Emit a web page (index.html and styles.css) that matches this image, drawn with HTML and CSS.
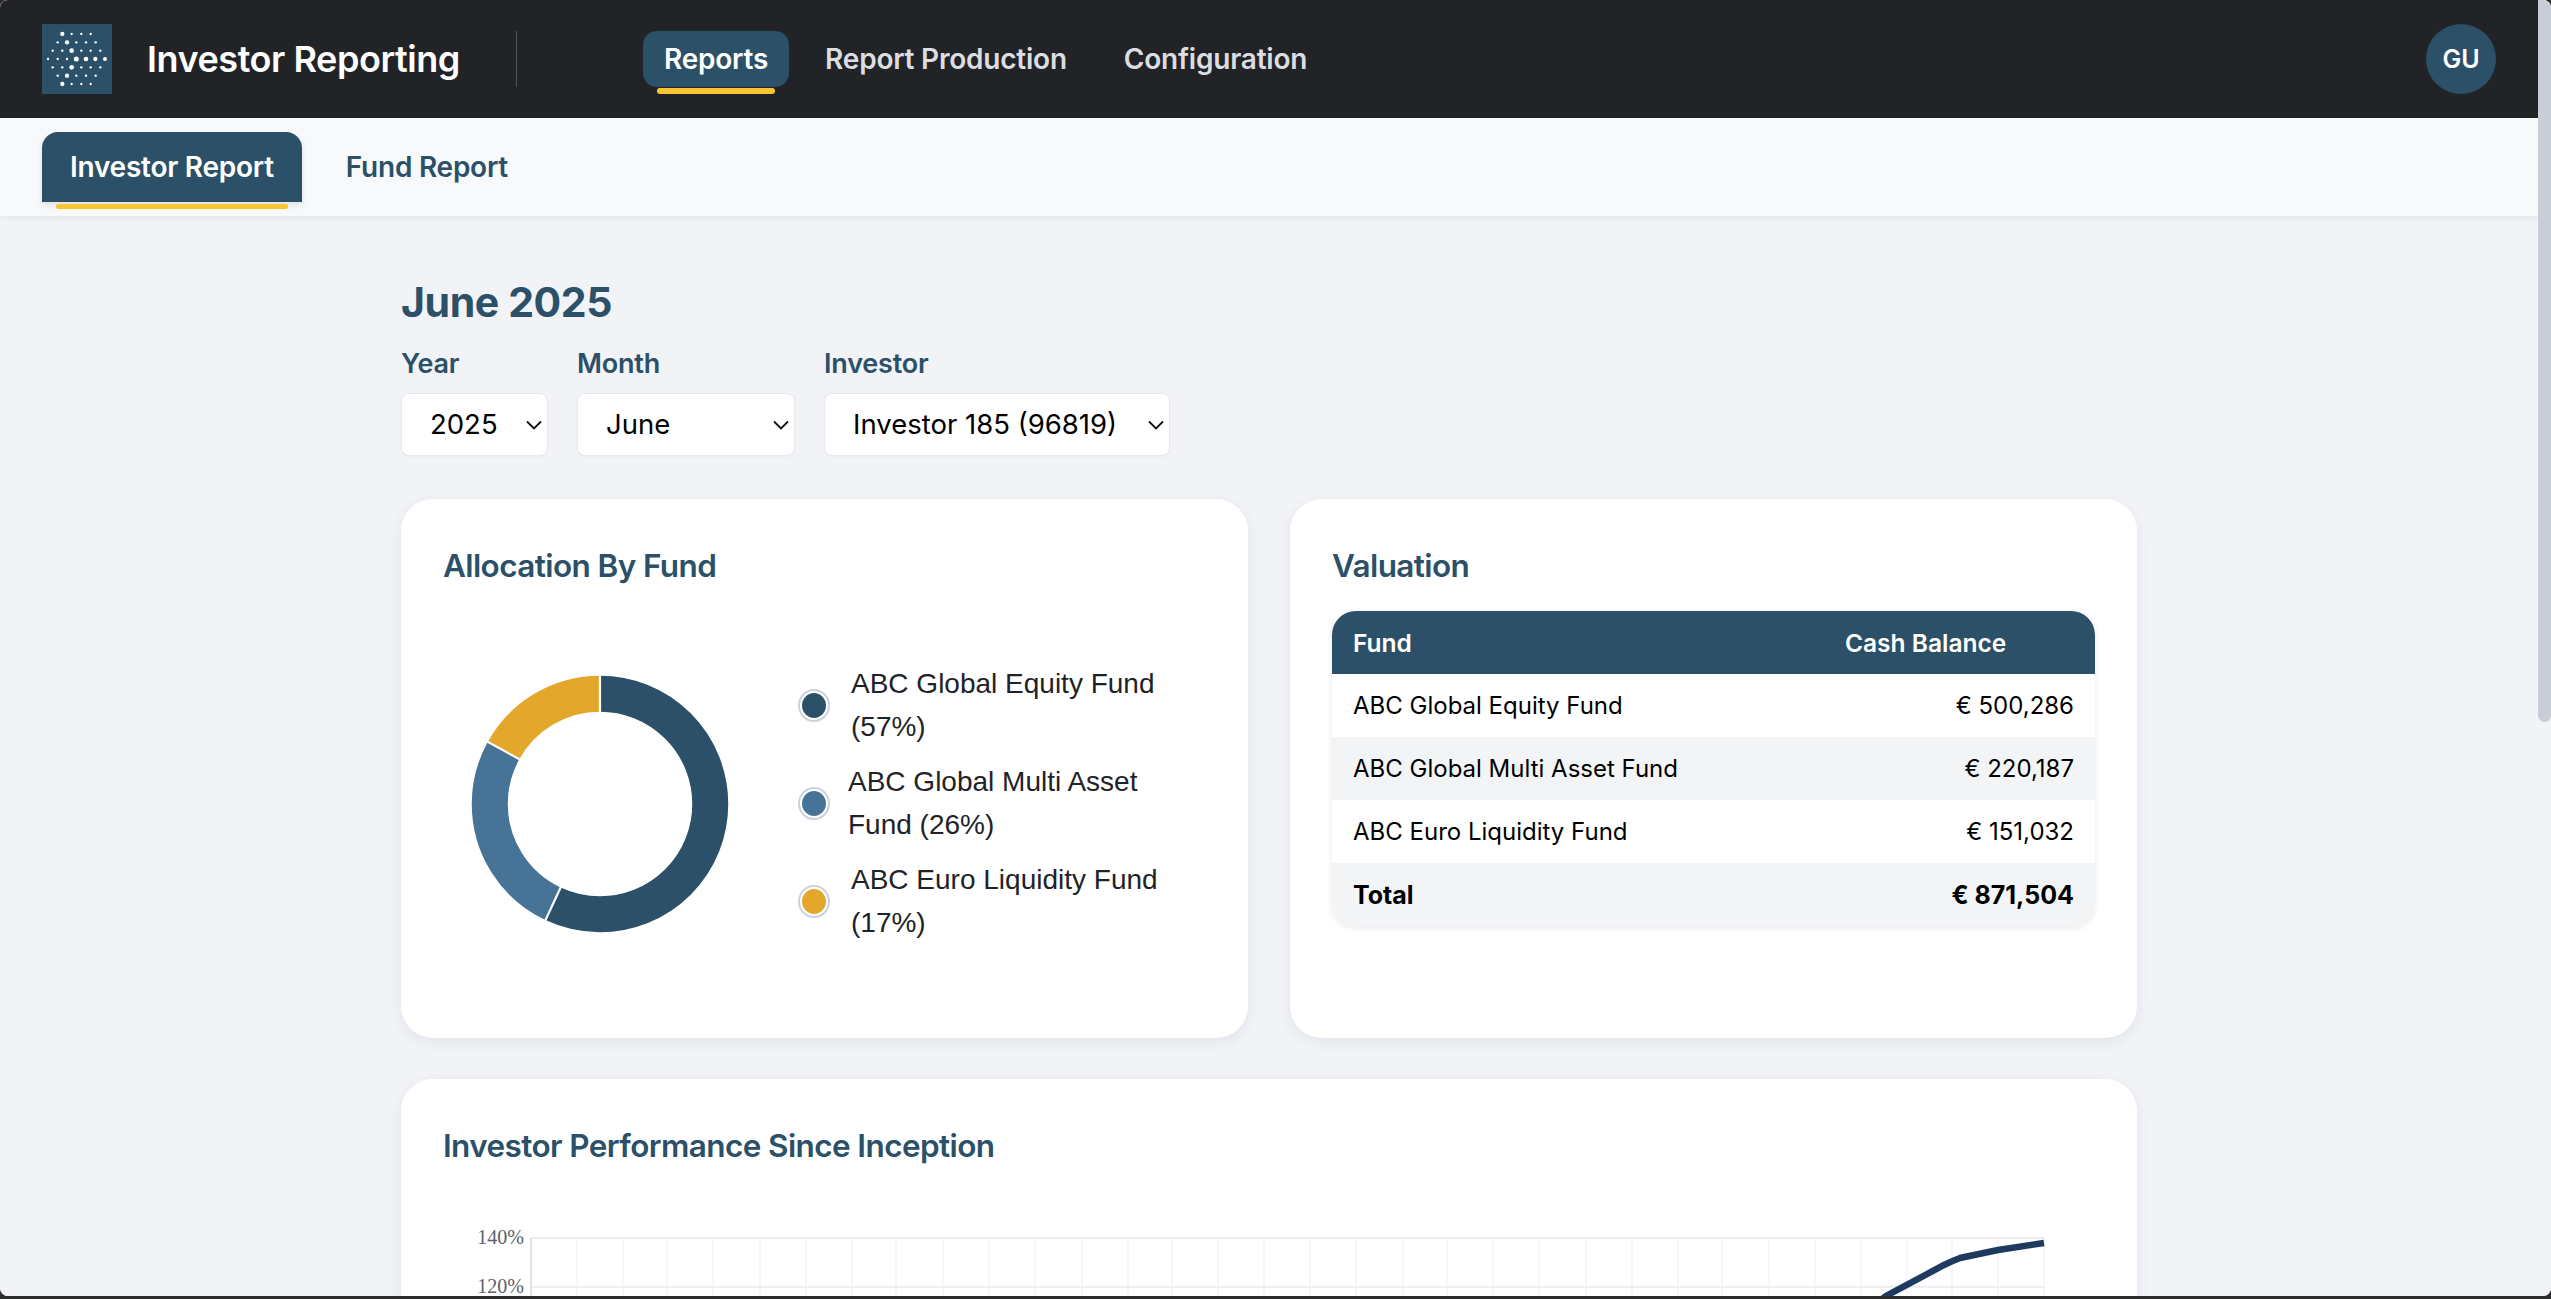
FILE: index.html
```html
<!DOCTYPE html>
<html lang="en">
<head>
<meta charset="utf-8">
<title>Investor Reporting</title>
<link rel="stylesheet" href="styles.css">
</head>
<body>
<div class="window">
  <div class="viewport">
    <div class="page">
      <header class="topbar">
        <svg class="logo" viewBox="66 42 210 210" aria-hidden="true">
          <rect x="66" y="42" width="210" height="210" fill="#2b5068"/>
          <g fill="#fff">
            <circle cx="127" cy="72" r="6.5"/><circle cx="155" cy="72" r="3.5"/><circle cx="184" cy="72" r="3.5"/><circle cx="212" cy="72" r="3.5"/>
            <circle cx="113" cy="97" r="3.5"/><circle cx="141" cy="97" r="6.5"/><circle cx="169" cy="97" r="3.5"/><circle cx="198" cy="97" r="3.5"/><circle cx="227" cy="97" r="3.5"/>
            <circle cx="98" cy="122" r="3.5"/><circle cx="127" cy="122" r="3.5"/><circle cx="155" cy="122" r="7"/><circle cx="184" cy="122" r="3.5"/><circle cx="212" cy="122" r="3.5"/><circle cx="241" cy="122" r="3.5"/>
            <circle cx="84" cy="147" r="3.5"/><circle cx="113" cy="147" r="3.5"/><circle cx="141" cy="147" r="3.5"/><circle cx="169" cy="147" r="7.5"/><circle cx="198" cy="147" r="7"/><circle cx="226" cy="147" r="6.5"/><circle cx="255" cy="147" r="6"/>
            <circle cx="98" cy="172" r="3.5"/><circle cx="127" cy="172" r="3.5"/><circle cx="155" cy="172" r="7"/><circle cx="184" cy="172" r="3.5"/><circle cx="212" cy="172" r="3.5"/><circle cx="241" cy="172" r="3.5"/>
            <circle cx="113" cy="197" r="3.5"/><circle cx="141" cy="197" r="6.5"/><circle cx="169" cy="197" r="3.5"/><circle cx="198" cy="197" r="3.5"/><circle cx="227" cy="197" r="3.5"/>
            <circle cx="127" cy="222" r="6.5"/><circle cx="155" cy="222" r="3.5"/><circle cx="184" cy="222" r="3.5"/><circle cx="212" cy="222" r="3.5"/>
          </g>
        </svg>
        <div class="brand">Investor Reporting</div>
        <div class="divider"></div>
        <nav class="mainnav">
          <a class="mainnav-item is-active">Reports</a>
          <a class="mainnav-item">Report Production</a>
          <a class="mainnav-item">Configuration</a>
        </nav>
        <div class="avatar">GU</div>
      </header>
      <div class="subnav">
        <a class="subnav-item is-active">Investor Report</a>
        <a class="subnav-item">Fund Report</a>
      </div>
      <main class="content">
        <h1 class="period">June 2025</h1>
        <div class="filters">
          <div class="filter">
            <label class="filter-label">Year</label>
            <div class="select-wrap select-year">
              <select class="select"><option>2025</option></select>
              <svg class="chevron" viewBox="0 0 16 10" aria-hidden="true"><path d="M1 1.5l7 7 7-7"/></svg>
            </div>
          </div>
          <div class="filter">
            <label class="filter-label">Month</label>
            <div class="select-wrap select-month">
              <select class="select"><option>June</option></select>
              <svg class="chevron" viewBox="0 0 16 10" aria-hidden="true"><path d="M1 1.5l7 7 7-7"/></svg>
            </div>
          </div>
          <div class="filter">
            <label class="filter-label">Investor</label>
            <div class="select-wrap select-investor">
              <select class="select"><option>Investor 185 (96819)</option></select>
              <svg class="chevron" viewBox="0 0 16 10" aria-hidden="true"><path d="M1 1.5l7 7 7-7"/></svg>
            </div>
          </div>
        </div>
        <div class="card-row">
          <section class="card">
            <h2 class="card-title">Allocation By Fund</h2>
            <div class="allocation">
              <svg class="donut" viewBox="0 0 314 314" aria-hidden="true">
                <g fill="none" stroke-width="36" transform="rotate(-90 157 157)">
                  <circle cx="157" cy="157" r="110.25" stroke="#2b5068" pathLength="100" stroke-dasharray="57 43" stroke-dashoffset="0"/>
                  <circle cx="157" cy="157" r="110.25" stroke="#477396" pathLength="100" stroke-dasharray="26 74" stroke-dashoffset="-57"/>
                  <circle cx="157" cy="157" r="110.25" stroke="#e3a82b" pathLength="100" stroke-dasharray="17 83" stroke-dashoffset="-83"/>
                </g>
                <g stroke="#fff" stroke-width="2.2">
                  <line x1="157" y1="26" x2="157" y2="68"/>
                  <line x1="100.8" y1="276.6" x2="119.3" y2="237"/>
                  <line x1="41.6" y1="93.1" x2="78.4" y2="113.4"/>
                </g>
              </svg>
              <ul class="legend">
                <li class="legend-item"><span class="legend-dot"><i class="swatch swatch-dark"></i></span><span class="legend-text">ABC Global Equity Fund (57%)</span></li>
                <li class="legend-item legend-item-tight"><span class="legend-dot"><i class="swatch swatch-mid"></i></span><span class="legend-text">ABC Global Multi Asset Fund (26%)</span></li>
                <li class="legend-item"><span class="legend-dot"><i class="swatch swatch-gold"></i></span><span class="legend-text">ABC Euro Liquidity Fund (17%)</span></li>
              </ul>
            </div>
          </section>
          <section class="card">
            <h2 class="card-title">Valuation</h2>
            <table class="valuation">
              <thead>
                <tr><th>Fund</th><th class="col-cash">Cash Balance</th></tr>
              </thead>
              <tbody>
                <tr><td>ABC Global Equity Fund</td><td class="num">€ 500,286</td></tr>
                <tr><td>ABC Global Multi Asset Fund</td><td class="num">€ 220,187</td></tr>
                <tr><td>ABC Euro Liquidity Fund</td><td class="num">€ 151,032</td></tr>
                <tr class="total"><td>Total</td><td class="num">€ 871,504</td></tr>
              </tbody>
            </table>
          </section>
        </div>
        <section class="card card-chart">
          <h2 class="card-title">Investor Performance Since Inception</h2>
          <svg class="perf" viewBox="443 1190 1652 320" aria-hidden="true">
            <g class="grid-v">
              <path d="M577 1238V1510M623 1238V1510M667 1238V1510M713 1238V1510M760 1238V1510M806 1238V1510M852 1238V1510M896 1238V1510M943 1238V1510M989 1238V1510M1035 1238V1510M1082 1238V1510M1128 1238V1510M1172 1238V1510M1218 1238V1510M1264 1238V1510M1310 1238V1510M1356 1238V1510M1403 1238V1510M1447 1238V1510M1493 1238V1510M1539 1238V1510M1586 1238V1510M1632 1238V1510M1678 1238V1510M1722 1238V1510M1769 1238V1510M1815 1238V1510M1861 1238V1510M1907 1238V1510M1952 1238V1510M1998 1238V1510M2044 1238V1510"/>
            </g>
            <g class="grid-h"><path d="M531 1238H2044M531 1287H2044M531 1336H2044"/></g>
            <path class="axis-y" d="M531 1238V1510"/>
            <text class="tick" x="524" y="1244">140%</text>
            <text class="tick" x="524" y="1293">120%</text>
            <path class="line" d="M1830 1340L1886 1296L1944 1265Q1952 1261 1960 1258L1998 1250L2044 1243"/>
          </svg>
        </section>
      </main>
    </div>
    <div class="scrollbar"><div class="scroll-thumb"></div></div>
  </div>
</div>
</body>
</html>
```

FILE: styles.css
```css
* { box-sizing: border-box; }
html, body { margin: 0; height: 100%; overflow: hidden; background: #2c2c2c; }
body { font-family: Inter, "Liberation Sans", sans-serif; color: #000; }

.window { height: 1299px; padding-bottom: 3px; display: flex; flex-direction: column; }
.viewport { flex: 1; min-height: 0; display: flex; overflow: hidden; border-radius: 8px; background: #f1f3f7; }
.page { flex: 1; min-width: 0; overflow: hidden; background: #f1f3f7; }
.scrollbar { width: 13px; background: #f1f3f7; }
.scroll-thumb { height: 722px; background: #c9ced6; border-radius: 0 0 7px 7px; }

.topbar { height: 118px; background: #212327; display: flex; align-items: center; padding: 0 42px; }
.logo { width: 70px; height: 70px; display: block; flex: none; }
.brand { margin-left: 35px; width: 369px; font-size: 36px; font-weight: 600; letter-spacing: -0.45px; color: #fff; white-space: nowrap; }
.divider { width: 1px; height: 56px; background: #53565b; }
.mainnav { display: flex; align-items: center; margin-left: 126px; gap: 15px; }
.mainnav-item { position: relative; height: 56px; padding: 0 21px; display: flex; align-items: center; font-size: 28px; font-weight: 600; letter-spacing: -0.22px; color: #dcdde0; white-space: nowrap; border-radius: 14px; }
.mainnav-item.is-active { background: #2b5068; color: #fff; }
.mainnav-item.is-active::after { content: ""; position: absolute; left: 14px; right: 14px; bottom: -7px; height: 6px; border-radius: 3px; background: #f9c534; }
.avatar { margin-left: auto; width: 70px; height: 70px; border-radius: 50%; background: #2b5068; color: #fff; display: flex; align-items: center; justify-content: center; font-size: 25px; font-weight: 600; }

.subnav { height: 98px; background: #f8f9fb; display: flex; align-items: flex-start; padding: 14px 42px 0; gap: 16px; box-shadow: 0 2px 5px rgba(0,0,0,.06); position: relative; }
.subnav-item { position: relative; height: 70px; padding: 0 28px; display: flex; align-items: center; font-size: 28px; font-weight: 600; letter-spacing: -0.25px; color: #2b5068; white-space: nowrap; border-radius: 16px 16px 0 0; }
.subnav-item.is-active { background: #2b5068; color: #fff; box-shadow: 0 3px 6px rgba(0,0,0,.1); }
.subnav-item.is-active::after { content: ""; position: absolute; left: 14px; right: 14px; bottom: -7px; height: 5px; border-radius: 3px; background: #f9c534; }

.content { width: 1736px; margin: 0 auto; padding-top: 61px; }
.period { margin: 0; font-size: 41px; line-height: 50px; font-weight: 700; letter-spacing: -0.4px; color: #2b5068; }
.filters { display: flex; gap: 29px; margin-top: 20.5px; }
.filter { display: flex; flex-direction: column; gap: 13px; }
.filter-label { font-size: 27px; line-height: 32px; font-weight: 600; letter-spacing: -0.2px; color: #2b5068; }
.select-wrap { position: relative; height: 63.5px; }
.select-year { width: 147px; }
.select-month { width: 218px; }
.select-investor { width: 346px; }
.select { appearance: none; width: 100%; height: 100%; border: 1px solid #e6e8ed; border-radius: 8px; background: #fff; font: 400 27.5px Inter, "Liberation Sans", sans-serif; color: #000; padding: 0 28px; box-shadow: 0 1px 2px rgba(0,0,0,.03); }
.chevron { position: absolute; right: 6px; top: 27px; width: 16px; height: 10px; fill: none; stroke: #111; stroke-width: 1.8; pointer-events: none; }

.card-row { display: grid; grid-template-columns: 1fr 1fr; gap: 42px; margin-top: 43px; }
.card { background: #fff; border-radius: 32px; padding: 42px; box-shadow: 0 4px 14px rgba(30,40,60,.07); }
.card-title { margin: 0; font-size: 31.5px; line-height: 50px; font-weight: 600; letter-spacing: -0.6px; color: #2b5068; }

.allocation { display: flex; align-items: center; gap: 41px; height: 385px; margin-top: 20px; }
.donut { width: 314px; height: 314px; flex: none; display: block; }
.legend { list-style: none; margin: 0; padding: 0; display: flex; flex-direction: column; gap: 13px; }
.legend-item { display: flex; align-items: center; gap: 21px; }
.legend-item-tight { gap: 18px; }
.legend-dot { width: 32px; height: 33px; border-radius: 50%; border: 2px solid #cbd2dc; display: flex; align-items: center; justify-content: center; flex: none; background: #fff; }
.swatch { display: block; width: 24px; height: 25px; border-radius: 50%; }
.swatch-dark { background: #2b5068; }
.swatch-mid { background: #477396; }
.swatch-gold { background: #e3a82b; }
.legend-text { max-width: 320px; font: 400 28px/42.5px "Liberation Sans", Arial, sans-serif; color: #1f2328; }

.valuation { width: 100%; margin-top: 20px; border-collapse: separate; border-spacing: 0; border-radius: 24px; overflow: hidden; box-shadow: 0 2px 6px rgba(30,40,60,.1); font-size: 24px; table-layout: fixed; }
.valuation th, .valuation td { height: 63px; padding: 0 21px; text-align: left; }
.valuation th { background: #2b5068; color: #fff; font-size: 24.5px; font-weight: 600; }
.col-cash { width: 271px; }
.valuation .num { text-align: right; }
.valuation tbody tr:nth-child(even) td { background: #f3f4f6; }
.valuation .total td { font-size: 25px; font-weight: 700; }

.card-chart { margin-top: 41px; }
.perf { display: block; width: 1652px; height: 320px; margin-top: 19px; overflow: visible; }
.grid-v { fill: none; stroke: #f2f3f6; stroke-width: 1.5; }
.grid-h { fill: none; stroke: #eceef2; stroke-width: 2; }
.axis-y { fill: none; stroke: #e0e2e7; stroke-width: 2; }
.tick { font: 400 20px "Liberation Serif", serif; fill: #5c6068; text-anchor: end; }
.line { fill: none; stroke: #1f3a5f; stroke-width: 6.5; }
```
